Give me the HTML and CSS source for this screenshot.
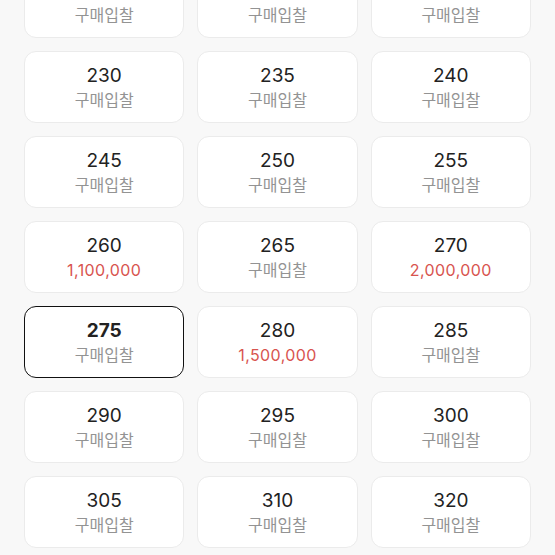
FILE: index.html
```html
<!DOCTYPE html>
<html lang="ko">
<head>
  <meta charset="UTF-8" />
  <meta name="viewport" content="width=device-width, initial-scale=1.0" />
  <title>사이즈 선택</title>
  <link rel="stylesheet" href="styles.css">
</head>
<body>
  <div class="sizes">
    <div class="size"><span class="num">225</span><span class="bid">구매입찰</span></div>
    <div class="size"><span class="num">225</span><span class="bid">구매입찰</span></div>
    <div class="size"><span class="num">225</span><span class="bid">구매입찰</span></div>

    <div class="size"><span class="num">230</span><span class="bid">구매입찰</span></div>
    <div class="size"><span class="num">235</span><span class="bid">구매입찰</span></div>
    <div class="size"><span class="num">240</span><span class="bid">구매입찰</span></div>

    <div class="size"><span class="num">245</span><span class="bid">구매입찰</span></div>
    <div class="size"><span class="num">250</span><span class="bid">구매입찰</span></div>
    <div class="size"><span class="num">255</span><span class="bid">구매입찰</span></div>

    <div class="size"><span class="num">260</span><span class="price">1,100,000</span></div>
    <div class="size"><span class="num">265</span><span class="bid">구매입찰</span></div>
    <div class="size"><span class="num">270</span><span class="price">2,000,000</span></div>

    <div class="size selected"><span class="num">275</span><span class="bid">구매입찰</span></div>
    <div class="size"><span class="num">280</span><span class="price">1,500,000</span></div>
    <div class="size"><span class="num">285</span><span class="bid">구매입찰</span></div>

    <div class="size"><span class="num">290</span><span class="bid">구매입찰</span></div>
    <div class="size"><span class="num">295</span><span class="bid">구매입찰</span></div>
    <div class="size"><span class="num">300</span><span class="bid">구매입찰</span></div>

    <div class="size"><span class="num">305</span><span class="bid">구매입찰</span></div>
    <div class="size"><span class="num">310</span><span class="bid">구매입찰</span></div>
    <div class="size"><span class="num">320</span><span class="bid">구매입찰</span></div>
  </div>
</body>
</html>
```

FILE: styles.css
```css
html, body {
  margin: 0;
  background: #f8f8f8;
  overflow: hidden;
}
body {
  font-family: Inter, "Noto Sans CJK KR", sans-serif;
  color: #222;
}
.sizes {
  display: grid;
  grid-template-columns: repeat(3, 1fr);
  column-gap: 13px;
  row-gap: 13px;
  padding: 0 24px;
  margin-top: -34px;
}
.size {
  box-sizing: border-box;
  height: 72px;
  background: #fff;
  border: 1px solid #ebebeb;
  border-radius: 12px;
  display: flex;
  flex-direction: column;
  align-items: center;
  justify-content: center;
  padding-top: 2px;
}
.size.selected {
  border: 1.5px solid #111;
}
.num {
  font-size: 19px;
  line-height: 24px;
  color: #222;
}
.selected .num {
  font-weight: 700;
}
.bid {
  font-size: 16px;
  line-height: 24px;
  color: #939393;
}
.price {
  font-size: 16px;
  line-height: 24px;
  color: #d8544f;
  letter-spacing: 0.4px;
}
```
